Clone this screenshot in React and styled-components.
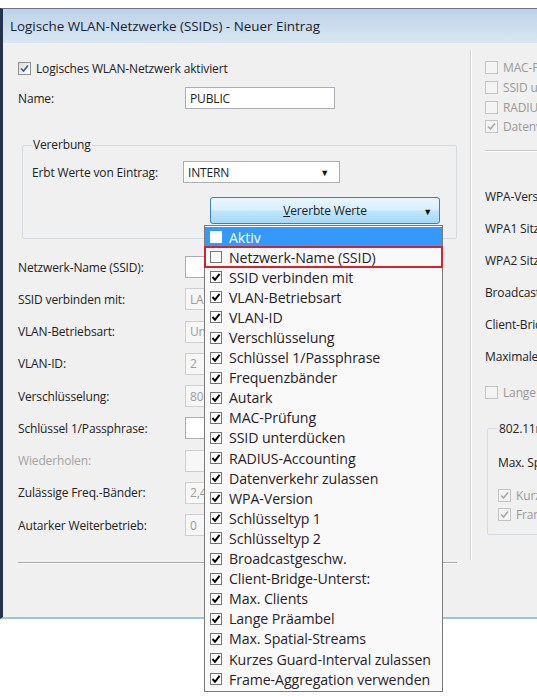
import React from 'react';
import styled, { createGlobalStyle } from 'styled-components';

const GlobalStyle = createGlobalStyle`
  html, body { margin: 0; padding: 0; background: #ffffff; }
  body { font-family: "Open Sans", "Noto Sans", sans-serif; color: #222; }
`;

const Page = styled.div`
  width: 537px;
  height: 696px;
  overflow: hidden;
  padding-top: 8px;
  box-sizing: border-box;
  background: #ffffff;
`;

const Window = styled.div`
  width: 600px;
  height: 611px;
  box-sizing: border-box;
  border-top: 1px solid #6c7886;
  border-left: 3px solid #25334a;
  border-bottom: 2px solid #9fc4d8;
  background: #f0f0f0;
  display: flex;
  flex-direction: column;
`;

const TitleBar = styled.div`
  flex: none;
  height: 34px;
  display: flex;
  align-items: center;
  padding-left: 7px;
  background: linear-gradient(#bed2e8, #d9e6f3);
  font-size: 13.4px;
  color: #17212e;
  white-space: nowrap;
`;

const Body = styled.div`
  flex: 1;
  display: flex;
  font-size: 12px;
  letter-spacing: -0.15px;
`;

const LeftCol = styled.div`
  width: 467px;
  flex: none;
  box-sizing: border-box;
  padding-left: 15px;
  display: flex;
  flex-direction: column;
`;

const RightCol = styled.div`
  flex: 1;
  margin-top: 7px;
  height: 510px;
  border-left: 1px solid #d2d2d2;
  box-shadow: inset 1px 0 0 #ffffff;
  padding-left: 14px;
  display: flex;
  flex-direction: column;
  white-space: nowrap;
`;

const CheckRow = styled.div`
  display: flex;
  align-items: center;
  gap: 5px;
  height: ${(p) => p.h || 20}px;
  margin-top: ${(p) => p.mt || 0}px;
  margin-left: ${(p) => p.ml || 0}px;
  color: ${(p) => (p.disabled ? '#9a9a9a' : '#222')};
  white-space: nowrap;
`;

const Box = styled.span`
  flex: none;
  width: 13px;
  height: 13px;
  box-sizing: border-box;
  border: 1px solid ${(p) => (p.disabled ? '#c4c4c4' : '#8e8f8f')};
  background: ${(p) => (p.disabled ? '#f4f4f4' : 'linear-gradient(135deg, #dcdcdc, #ffffff)')};
  display: flex;
  align-items: center;
  justify-content: center;
`;

const CheckBox = ({ checked, disabled, color }) => (
  <Box disabled={disabled}>
    {checked && (
      <svg width="11" height="11" viewBox="0 0 11 11">
        <path d="M2 5.5 L4.5 8 L9 2.5" fill="none" stroke={color || (disabled ? '#a8a8a8' : '#3a5d8c')} strokeWidth="1.6" />
      </svg>
    )}
  </Box>
);

const FormRow = styled.div`
  display: grid;
  grid-template-columns: ${(p) => p.labelW || 167}px auto;
  align-items: center;
  height: ${(p) => p.h || 32.25}px;
  margin-top: ${(p) => p.mt || 0}px;
  color: ${(p) => (p.disabled ? '#a3a3a3' : '#222')};
  white-space: nowrap;
`;

const Field = styled.div`
  width: ${(p) => p.w || 155}px;
  height: 22px;
  box-sizing: border-box;
  border: 1px solid ${(p) => (p.dim ? '#cfcfcf' : '#abadb3')};
  background: ${(p) => (p.dim ? '#f7f7f7' : '#ffffff')};
  color: ${(p) => (p.dim ? '#9c9c9c' : '#222')};
  padding-left: 4px;
  display: flex;
  align-items: center;
  justify-content: space-between;
  padding-right: 10px;
`;

const Arrow = styled.span`
  font-size: 9px;
  color: #111;
`;

const Group = styled.fieldset`
  margin: ${(p) => p.mt || 0}px 0 0 ${(p) => p.ml || 0}px;
  width: ${(p) => p.w}px;
  box-sizing: border-box;
  border: 1px solid #d5dbe0;
  border-radius: 2px;
  padding: ${(p) => p.pt || 0}px 0 ${(p) => p.pb || 0}px ${(p) => p.pl || 9}px;
  display: flex;
  flex-direction: column;
`;

const Legend = styled.legend`
  padding: 0 1px;
  line-height: 16px;
  font-size: 12px;
  color: #222;
`;

const ButtonWrap = styled.div`
  position: relative;
  margin: 14px 0 0 178px;
  width: 230px;
`;

const DropButton = styled.div`
  height: 27px;
  box-sizing: border-box;
  border: 1px solid #3c7fb1;
  border-radius: 3px;
  background: linear-gradient(#eaf6fd 0%, #d9f0fc 48%, #bee6fd 52%, #a7d9f5 100%);
  display: flex;
  align-items: center;
  justify-content: center;
  position: relative;
  color: #1c1c1c;
  u { text-decoration: underline; }
`;

const ButtonArrow = styled.span`
  position: absolute;
  right: 7px;
  top: 7px;
  font-size: 9px;
  color: #111;
`;

const DropList = styled.div`
  position: absolute;
  top: 28px;
  left: -6px;
  width: 239px;
  box-sizing: border-box;
  border: 1px solid #7a7a7a;
  background: #f9f9f9;
  padding: 1px 0 2px;
  z-index: 5;
  font-size: 14.2px;
  letter-spacing: -0.1px;
`;

const ListItem = styled.div`
  height: 20.1px;
  display: flex;
  align-items: center;
  gap: 7px;
  padding-left: 5px;
  box-sizing: border-box;
  background: ${(p) => (p.active ? '#3399ff' : 'transparent')};
  color: ${(p) => (p.active ? '#ffffff' : '#2a2227')};
  outline: ${(p) => (p.marked ? '2px solid #d3232d' : 'none')};
  outline-offset: -1px;
  white-space: nowrap;
`;

const ListBox = styled.span`
  flex: none;
  width: 12px;
  height: 12px;
  box-sizing: border-box;
  border: 1px solid ${(p) => (p.active ? '#ffffff' : '#767676')};
  background: #ffffff;
  display: flex;
  align-items: center;
  justify-content: center;
`;

const Separator = styled.div`
  margin-top: 21px;
  width: 439px;
  height: 1px;
  background: #a9a9a9;
  box-shadow: 0 1px 0 #ffffff;
`;

const HLine = styled.div`
  margin-top: ${(p) => p.mt || 0}px;
  height: 1px;
  background: #c8c8c8;
  box-shadow: 0 1px 0 #ffffff;
`;

const Label = styled.div`
  height: ${(p) => p.h || 32}px;
  margin-top: ${(p) => p.mt || 0}px;
  display: flex;
  align-items: center;
  color: #222;
`;

const items = [
  'Aktiv',
  'Netzwerk-Name (SSID)',
  'SSID verbinden mit',
  'VLAN-Betriebsart',
  'VLAN-ID',
  'Verschlüsselung',
  'Schlüssel 1/Passphrase',
  'Frequenzbänder',
  'Autark',
  'MAC-Prüfung',
  'SSID unterdücken',
  'RADIUS-Accounting',
  'Datenverkehr zulassen',
  'WPA-Version',
  'Schlüsseltyp 1',
  'Schlüsseltyp 2',
  'Broadcastgeschw.',
  'Client-Bridge-Unterst:',
  'Max. Clients',
  'Lange Präambel',
  'Max. Spatial-Streams',
  'Kurzes Guard-Interval zulassen',
  'Frame-Aggregation verwenden',
];

const rows = [
  { label: 'Netzwerk-Name (SSID):', value: '' },
  { label: 'SSID verbinden mit:', value: 'LAN-1', dim: true },
  { label: 'VLAN-Betriebsart:', value: 'Untagged', dim: true },
  { label: 'VLAN-ID:', value: '2', dim: true },
  { label: 'Verschlüsselung:', value: '802.11i (WPA)-PSK', dim: true },
  { label: 'Schlüssel 1/Passphrase:', value: '' },
  { label: 'Wiederholen:', value: '', disabled: true },
  { label: 'Zulässige Freq.-Bänder:', value: '2,4/5 GHz', dim: true },
  { label: 'Autarker Weiterbetrieb:', value: '0', dim: true },
];

export default function App() {
  return (
    <>
      <GlobalStyle />
      <Page>
        <Window>
          <TitleBar>Logische WLAN-Netzwerke (SSIDs) - Neuer Eintrag</TitleBar>
          <Body>
            <LeftCol>
              <CheckRow mt={15}>
                <CheckBox checked />
                Logisches WLAN-Netzwerk aktiviert
              </CheckRow>
              <FormRow h={22} mt={9}>
                <span>Name:</span>
                <Field w={150}>PUBLIC</Field>
              </FormRow>
              <Group w={435} ml={4} mt={28} pt={8} pb={14}>
                <Legend>Vererbung</Legend>
                <FormRow h={22} labelW={151}>
                  <span>Erbt Werte von Eintrag:</span>
                  <Field w={157}>
                    INTERN
                    <Arrow>▼</Arrow>
                  </Field>
                </FormRow>
                <ButtonWrap>
                  <DropButton>
                    <span>
                      <u>V</u>ererbte Werte
                    </span>
                    <ButtonArrow>▼</ButtonArrow>
                  </DropButton>
                  <DropList>
                    {items.map((it, i) => (
                      <ListItem key={it} active={i === 0} marked={i === 1}>
                        <ListBox active={i === 0}>
                          {i > 1 && (
                            <svg width="10" height="10" viewBox="0 0 10 10">
                              <path d="M1.5 5 L4 7.8 L8.6 1.8" fill="none" stroke="#000" strokeWidth="2" />
                            </svg>
                          )}
                        </ListBox>
                        {it}
                      </ListItem>
                    ))}
                  </DropList>
                </ButtonWrap>
              </Group>
              {rows.map((r, i) => (
                <FormRow key={r.label} mt={i === 0 ? 12 : 0} disabled={r.disabled}>
                  <span>{r.label}</span>
                  <Field dim={r.dim || r.disabled}>{r.value}</Field>
                </FormRow>
              ))}
              <Separator />
            </LeftCol>
            <RightCol>
              <CheckRow h={19.7} mt={8} disabled>
                <CheckBox disabled />
                MAC-Prüfung
              </CheckRow>
              <CheckRow h={19.7} disabled>
                <CheckBox disabled />
                SSID unterdrücken
              </CheckRow>
              <CheckRow h={19.7} disabled>
                <CheckBox disabled />
                RADIUS-Accounting aktiviert
              </CheckRow>
              <CheckRow h={19.7} disabled>
                <CheckBox disabled checked />
                Datenverkehr zulassen
              </CheckRow>
              <HLine mt={13} />
              <Label mt={30}>WPA-Version:</Label>
              <Label>WPA1 Sitzungsschlüssel-Typ:</Label>
              <Label>WPA2 Sitzungsschlüssel-Typ:</Label>
              <Label>Broadcast-Rate:</Label>
              <Label>Client-Bridge-Unterstützung:</Label>
              <Label>Maximale Anzahl Clients:</Label>
              <CheckRow mt={10} disabled>
                <CheckBox disabled />
                Lange Präambel für 802.11b verwenden
              </CheckRow>
              <Group w={120} ml={2} mt={18} pt={16} pb={10} pl={10}>
                <Legend>802.11n</Legend>
                <Label h={20}>Max. Spatial-Streams:</Label>
                <CheckRow h={19} mt={13} disabled>
                  <CheckBox disabled checked />
                  Kurzes Guard-Intervall zulassen
                </CheckRow>
                <CheckRow h={19} disabled>
                  <CheckBox disabled checked />
                  Frame-Aggregation verwenden
                </CheckRow>
              </Group>
            </RightCol>
          </Body>
        </Window>
      </Page>
    </>
  );
}
